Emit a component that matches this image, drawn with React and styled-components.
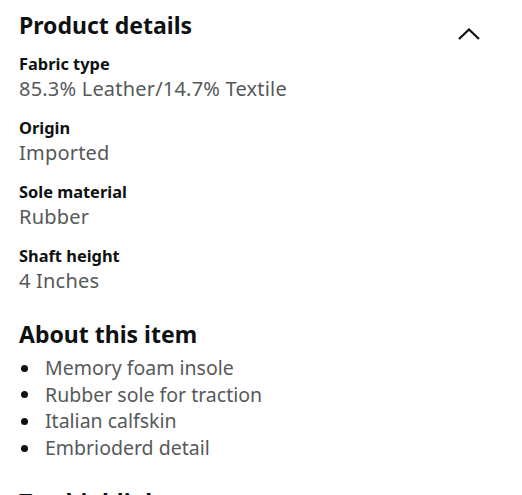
import React from "react";
import styled, { createGlobalStyle } from "styled-components";

const Global = createGlobalStyle`
  html, body { margin: 0; padding: 0; background: #fff; }
  body { font-family: "Noto Sans", "Liberation Sans", sans-serif; color: #0f1111; }
`;

const Page = styled.div`
  width: 522px;
  height: 495px;
  overflow: hidden;
  padding: 9px 19px 0 19px;
  box-sizing: border-box;
`;

const HeaderRow = styled.div`
  display: flex;
  align-items: flex-start;
  justify-content: space-between;
`;

const SectionTitle = styled.h2`
  margin: ${(p) => (p.$gap ? `${p.$gap}px` : 0)} 0 0 0;
  font-size: 23px;
  font-weight: 700;
  line-height: 32px;
  color: #0f1111;
`;

const Toggle = styled.button`
  border: 0;
  background: none;
  padding: 0;
  margin: 19px 23px 0 0;
  width: 22px;
  height: 12px;
  display: block;
  svg { display: block; }
`;

const DetailList = styled.dl`
  margin: 11px 0 0 0;
  display: flex;
  flex-direction: column;
  gap: 14px;
`;

const DetailItem = styled.div`
  display: flex;
  flex-direction: column;
`;

const Label = styled.dt`
  font-size: 16.4px;
  font-weight: 700;
  line-height: 24px;
`;

const Value = styled.dd`
  margin: 0;
  font-size: 20px;
  letter-spacing: 0.2px;
  line-height: 26px;
  color: #565959;
`;

const Bullets = styled.ul`
  margin: 5px 0 0 0;
  padding: 0;
  list-style: none;
`;

const Bullet = styled.li`
  display: flex;
  align-items: center;
  font-size: 19.5px;
  line-height: 26.6px;
  color: #565959;
  &::before {
    content: "";
    width: 7px;
    height: 7px;
    border-radius: 50%;
    background: #0f1111;
    margin: 0 17px 0 2px;
    flex: none;
  }
`;

const details = [
  ["Fabric type", "85.3% Leather/14.7% Textile"],
  ["Origin", "Imported"],
  ["Sole material", "Rubber"],
  ["Shaft height", "4 Inches"],
];

const bullets = [
  "Memory foam insole",
  "Rubber sole for traction",
  "Italian calfskin",
  "Embrioderd detail",
];

export default function App() {
  return (
    <>
      <Global />
      <Page>
        <HeaderRow>
          <SectionTitle>Product details</SectionTitle>
          <Toggle aria-label="Collapse">
            <svg width="22" height="12" viewBox="0 0 22 12">
              <polyline points="1,11 11,1.5 21,11" fill="none" stroke="#0f1111" strokeWidth="2.2" />
            </svg>
          </Toggle>
        </HeaderRow>
        <DetailList>
          {details.map(([k, v]) => (
            <DetailItem key={k}>
              <Label>{k}</Label>
              <Value>{v}</Value>
            </DetailItem>
          ))}
        </DetailList>
        <SectionTitle $gap={24}>About this item</SectionTitle>
        <Bullets>
          {bullets.map((b) => (
            <Bullet key={b}>{b}</Bullet>
          ))}
        </Bullets>
        <SectionTitle $gap={25}>Top highlights</SectionTitle>
      </Page>
    </>
  );
}
